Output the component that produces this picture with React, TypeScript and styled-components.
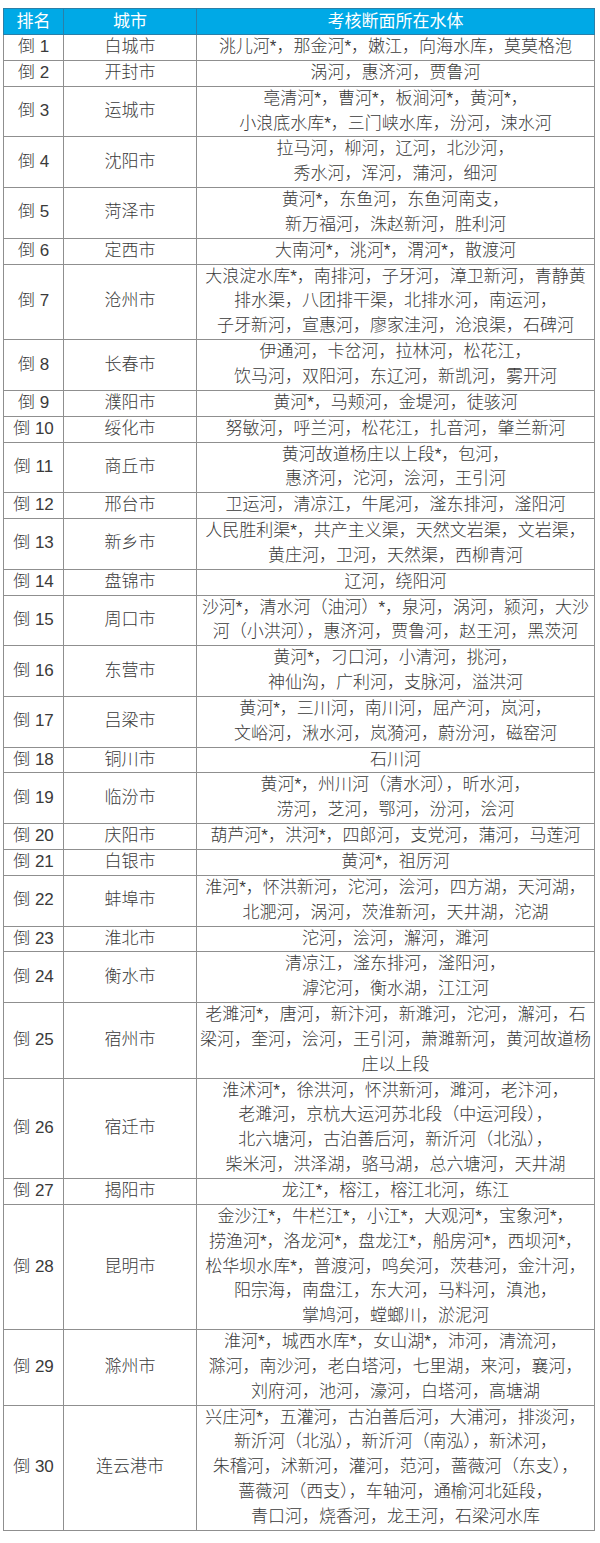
import React from "react";
import styled, { createGlobalStyle } from "styled-components";

const GlobalStyle = createGlobalStyle`
  html, body {
    margin: 0;
    padding: 0;
    background: #ffffff;
  }
  body {
    font-family: "Liberation Sans", "Noto Sans CJK SC", sans-serif;
    color: #3a3a3a;
  }
`;

const Page = styled.div`
  width: 600px;
  padding: 8px 0 0 3px;
  box-sizing: border-box;
`;

const Table = styled.table`
  width: 592px;
  border-collapse: collapse;
  table-layout: fixed;
  font-size: 17px;
  font-weight: 300;
`;

const HeadCell = styled.th`
  height: 25px;
  padding: 0;
  background: #00a9e6;
  color: #ffffff;
  font-weight: 400;
  line-height: 25px;
  text-align: center;
  border: 1px solid #2a7fa8;
`;

const Cell = styled.td`
  padding: 0;
  line-height: 24.85px;
  text-align: center;
  vertical-align: middle;
  border: 1px solid #8f8f8f;
`;

const Line = styled.div`
  white-space: nowrap;
`;

type Row = { rank: number; city: string; lines: string[] };

const rows: Row[] = [
  { rank: 1, city: "白城市", lines: ["洮儿河*，那金河*，嫩江，向海水库，莫莫格泡"] },
  { rank: 2, city: "开封市", lines: ["涡河，惠济河，贾鲁河"] },
  { rank: 3, city: "运城市", lines: ["亳清河*，曹河*，板涧河*，黄河*，", "小浪底水库*，三门峡水库，汾河，涑水河"] },
  { rank: 4, city: "沈阳市", lines: ["拉马河，柳河，辽河，北沙河，", "秀水河，浑河，蒲河，细河"] },
  { rank: 5, city: "菏泽市", lines: ["黄河*，东鱼河，东鱼河南支，", "新万福河，洙赵新河，胜利河"] },
  { rank: 6, city: "定西市", lines: ["大南河*，洮河*，渭河*，散渡河"] },
  { rank: 7, city: "沧州市", lines: ["大浪淀水库*，南排河，子牙河，漳卫新河，青静黄", "排水渠，八团排干渠，北排水河，南运河，", "子牙新河，宣惠河，廖家洼河，沧浪渠，石碑河"] },
  { rank: 8, city: "长春市", lines: ["伊通河，卡岔河，拉林河，松花江，", "饮马河，双阳河，东辽河，新凯河，雾开河"] },
  { rank: 9, city: "濮阳市", lines: ["黄河*，马颊河，金堤河，徒骇河"] },
  { rank: 10, city: "绥化市", lines: ["努敏河，呼兰河，松花江，扎音河，肇兰新河"] },
  { rank: 11, city: "商丘市", lines: ["黄河故道杨庄以上段*，包河，", "惠济河，沱河，浍河，王引河"] },
  { rank: 12, city: "邢台市", lines: ["卫运河，清凉江，牛尾河，滏东排河，滏阳河"] },
  { rank: 13, city: "新乡市", lines: ["人民胜利渠*，共产主义渠，天然文岩渠，文岩渠，", "黄庄河，卫河，天然渠，西柳青河"] },
  { rank: 14, city: "盘锦市", lines: ["辽河，绕阳河"] },
  { rank: 15, city: "周口市", lines: ["沙河*，清水河（油河）*，泉河，涡河，颍河，大沙", "河（小洪河），惠济河，贾鲁河，赵王河，黑茨河"] },
  { rank: 16, city: "东营市", lines: ["黄河*，刁口河，小清河，挑河，", "神仙沟，广利河，支脉河，溢洪河"] },
  { rank: 17, city: "吕梁市", lines: ["黄河*，三川河，南川河，屈产河，岚河，", "文峪河，湫水河，岚漪河，蔚汾河，磁窑河"] },
  { rank: 18, city: "铜川市", lines: ["石川河"] },
  { rank: 19, city: "临汾市", lines: ["黄河*，州川河（清水河），昕水河，", "涝河，芝河，鄂河，汾河，浍河"] },
  { rank: 20, city: "庆阳市", lines: ["葫芦河*，洪河*，四郎河，支党河，蒲河，马莲河"] },
  { rank: 21, city: "白银市", lines: ["黄河*，祖厉河"] },
  { rank: 22, city: "蚌埠市", lines: ["淮河*，怀洪新河，沱河，浍河，四方湖，天河湖，", "北淝河，涡河，茨淮新河，天井湖，沱湖"] },
  { rank: 23, city: "淮北市", lines: ["沱河，浍河，澥河，濉河"] },
  { rank: 24, city: "衡水市", lines: ["清凉江，滏东排河，滏阳河，", "滹沱河，衡水湖，江江河"] },
  { rank: 25, city: "宿州市", lines: ["老濉河*，唐河，新汴河，新濉河，沱河，澥河，石", "梁河，奎河，浍河，王引河，萧濉新河，黄河故道杨", "庄以上段"] },
  { rank: 26, city: "宿迁市", lines: ["淮沭河*，徐洪河，怀洪新河，濉河，老汴河，", "老濉河，京杭大运河苏北段（中运河段），", "北六塘河，古泊善后河，新沂河（北泓），", "柴米河，洪泽湖，骆马湖，总六塘河，天井湖"] },
  { rank: 27, city: "揭阳市", lines: ["龙江*，榕江，榕江北河，练江"] },
  { rank: 28, city: "昆明市", lines: ["金沙江*，牛栏江*，小江*，大观河*，宝象河*，", "捞渔河*，洛龙河*，盘龙江*，船房河*，西坝河*，", "松华坝水库*，普渡河，鸣矣河，茨巷河，金汁河，", "阳宗海，南盘江，东大河，马料河，滇池，", "掌鸠河，螳螂川，淤泥河"] },
  { rank: 29, city: "滁州市", lines: ["淮河*，城西水库*，女山湖*，沛河，清流河，", "滁河，南沙河，老白塔河，七里湖，来河，襄河，", "刘府河，池河，濠河，白塔河，高塘湖"] },
  { rank: 30, city: "连云港市", lines: ["兴庄河*，五灌河，古泊善后河，大浦河，排淡河，", "新沂河（北泓），新沂河（南泓），新沭河，", "朱稽河，沭新河，灌河，范河，蔷薇河（东支），", "蔷薇河（西支），车轴河，通榆河北延段，", "青口河，烧香河，龙王河，石梁河水库"] },
];

export default function App() {
  return (
    <Page>
      <GlobalStyle />
      <Table>
        <colgroup>
          <col style={{ width: 60 }} />
          <col style={{ width: 133 }} />
          <col />
        </colgroup>
        <thead>
          <tr>
            <HeadCell>排名</HeadCell>
            <HeadCell>城市</HeadCell>
            <HeadCell>考核断面所在水体</HeadCell>
          </tr>
        </thead>
        <tbody>
          {rows.map((r) => (
            <tr key={r.rank}>
              <Cell>倒 {r.rank}</Cell>
              <Cell>{r.city}</Cell>
              <Cell>
                {r.lines.map((l, i) => (
                  <Line key={i}>{l}</Line>
                ))}
              </Cell>
            </tr>
          ))}
        </tbody>
      </Table>
    </Page>
  );
}
